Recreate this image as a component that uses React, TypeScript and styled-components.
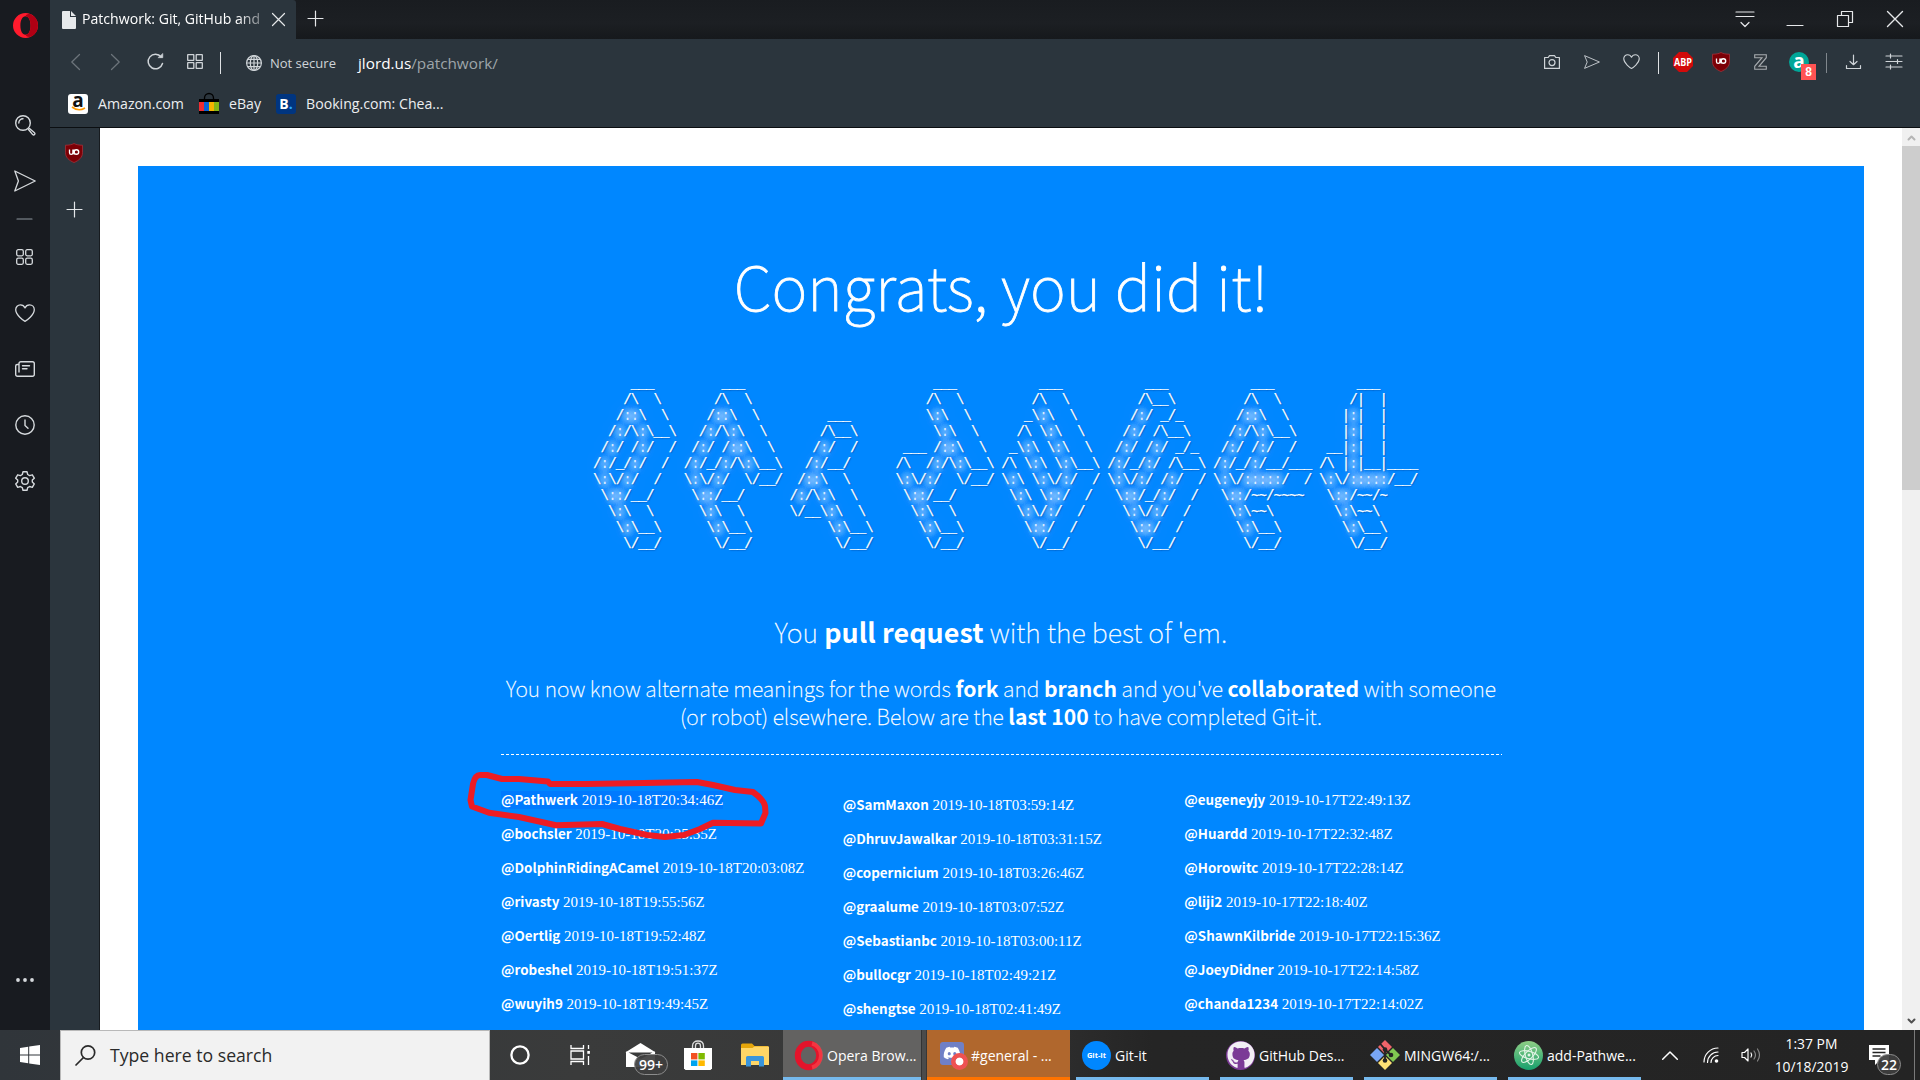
import React from "react";
import styled, { createGlobalStyle, css } from "styled-components";
import { FaDiscord, FaGithub } from "react-icons/fa";

const UI_FONT = `"Open Sans", "Noto Sans", sans-serif`;
const PAGE_FONT = `"Noto Sans CJK JP", "Open Sans", sans-serif`;

const GlobalStyle = createGlobalStyle`
  *, *::before, *::after { box-sizing: border-box; }
  body { margin: 0; background: #fff; font-family: ${UI_FONT}; overflow: hidden; }
  svg { display: block; flex: none; overflow: visible; }
`;

const Desktop = styled.div`
  width: 1920px;
  height: 1080px;
  display: flex;
  flex-direction: column;
  overflow: hidden;
`;

const Browser = styled.div`
  height: 1030px;
  display: flex;
`;

/* ---------- left rail ---------- */
const Rail = styled.nav`
  width: 50px;
  display: flex;
  flex-direction: column;
  background: #181b20;
  color: #d6dadd;
`;

const RailSlot = styled.div<{ $h?: number }>`
  height: ${(p) => p.$h ?? 56}px;
  display: grid;
  place-items: center;
  padding-right: 1px;
`;

const RailLogo = styled(RailSlot)`
  padding: 0 0 0 1px;
  margin-bottom: 47px;
`;

const RailMore = styled(RailSlot)`
  margin: auto 0 22px;
`;

/* ---------- browser chrome ---------- */
const Main = styled.div`
  flex: 1;
  display: flex;
  flex-direction: column;
`;

const TabStrip = styled.div`
  height: 39px;
  display: flex;
  background: linear-gradient(#191c20, #1c1f23 60%, #16191c);
  color: #e6e8ea;
`;

const Tab = styled.div`
  width: 246px;
  display: flex;
  align-items: center;
  padding-left: 12px;
  background: #2b353d;
  border-top-right-radius: 3px;
`;

const TabTitle = styled.span`
  width: 180px;
  margin: 0 0 2px 6px;
  overflow: hidden;
  white-space: nowrap;
  font-size: 14.1px;
  line-height: 20px;
  color: #fff;
  mask-image: linear-gradient(90deg, #000 155px, rgba(0, 0, 0, 0.35) 180px);
`;

const TabClose = styled.div`
  display: grid;
  place-items: center;
  width: 32px;
`;

const NewTab = styled.div`
  display: grid;
  place-items: center;
  width: 39px;
  padding-bottom: 2px;
`;

const WindowButtons = styled.div`
  margin-left: auto;
  display: flex;
`;

const WindowButton = styled.div`
  width: 50px;
  display: grid;
  place-items: center;
  padding-bottom: 1px;
`;

const Chrome = styled.div`
  height: 89px;
  background: #2b353d;
  border-bottom: 1px solid #0b0e11;
  color: #cfd4d8;
`;

const AddressRow = styled.div`
  height: 46px;
  display: flex;
  align-items: center;
  padding: 0 0 1px 5px;
`;

const IconSlot = styled.div<{ $w?: number; $dim?: boolean }>`
  width: ${(p) => p.$w ?? 40}px;
  display: grid;
  place-items: center;
  opacity: ${(p) => (p.$dim ? 0.4 : 1)};
`;

const Separator = styled.div<{ $dim?: boolean; $h?: number }>`
  width: 1px;
  height: ${(p) => p.$h ?? 22}px;
  margin-top: 2px;
  background: ${(p) => (p.$dim ? "#80878d" : "#dfe2e5")};
`;

const Security = styled.div`
  display: flex;
  align-items: center;
  gap: 8px;
  margin: 2px 0 0 20px;
  width: 112px;
  font-size: 13px;
  line-height: 20px;
`;

const Url = styled.div`
  margin-top: 2px;
  font-size: 15.3px;
  line-height: 20px;
  color: #9ea5aa;

  span { color: #fff; }
`;

const Tools = styled.div`
  margin-left: auto;
  display: flex;
  align-items: center;
  padding-right: 4.5px;
`;

const AddonBadge = styled.div`
  position: relative;
`;

const BadgeCount = styled.span`
  position: absolute;
  left: 12px;
  top: 12px;
  width: 15px;
  height: 16px;
  background: #ff5353;
  color: #fff;
  font: 700 12px/16px "Liberation Sans", sans-serif;
  text-align: center;
`;

const BookmarkBar = styled.div`
  height: 38px;
  display: flex;
  align-items: center;
  padding-left: 18px;
  font-size: 14.15px;
  line-height: 20px;
  color: #eceef0;
`;

const Bookmark = styled.div<{ $w: number }>`
  width: ${(p) => p.$w}px;
  display: flex;
  align-items: center;
  gap: 10px;
  white-space: nowrap;
`;

const FavTile = styled.div<{ $bg: string; $fg: string }>`
  width: 20px;
  height: 20px;
  border-radius: 3px;
  background: ${(p) => p.$bg};
  color: ${(p) => p.$fg};
  font: 700 14px/20px "Open Sans", sans-serif;
  text-align: center;

  i { color: #2aa8ff; font-style: normal; }
`;

const AmazonTile = styled(FavTile)`
  display: flex;
  flex-direction: column;
  align-items: center;
  font: 700 19px/13px "Open Sans", sans-serif;
`;

/* ---------- page area ---------- */
const Body = styled.div`
  flex: 1;
  display: flex;
  min-height: 0;
`;

const AddonPanel = styled.aside`
  width: 50px;
  background: #2b353d;
  border-right: 1px solid #171b1f;
  color: #e2e5e8;
`;

const Viewport = styled.main`
  flex: 1;
  padding: 38px 38px 0;
  background: #fff;
  overflow: hidden;
`;

const Blue = styled.section`
  height: 900px;
  padding: 84px 363px 0;
  background: #0087ff;
  color: #fff;
  font-family: ${PAGE_FONT};
  font-weight: 100;
  text-align: center;
  white-space: nowrap;
`;

const Title = styled.h1`
  margin: 0;
  font-size: 61.1px;
  line-height: 70px;
  font-weight: 100;
  letter-spacing: 0.06px;
  -webkit-text-stroke: 0.8px #fff;
`;

const Ascii = styled.pre`
  margin: 56px 0 0 92px;
  height: 176px;
  text-align: left;
  font: 14px/16px "Liberation Mono", monospace;
  letter-spacing: -0.84px;
  -webkit-text-stroke: 0.25px #fff;
  text-shadow: 1px 1px 1px rgba(0, 60, 140, 0.55);
`;

const halo = (blur: number, color: string, times: number) => Array(times).fill(`0 0 ${blur}px ${color}`).join(", ");

const Glow = styled.span`
  color: rgba(255, 255, 255, 0.8);
  -webkit-text-stroke: 0;
  text-shadow: ${halo(6, "#fff", 2)}, ${halo(10, "#fff", 5)}, ${halo(18, "rgba(215, 225, 255, 0.9)", 3)};
`;

const Subtitle = styled.h2`
  margin: 64px 0 0;
  font-size: 26.9px;
  line-height: 32px;
  font-weight: 100;
  letter-spacing: 0.07px;
  -webkit-text-stroke: 0.3px #fff;
`;

const Strong = styled.strong`
  font-weight: 700;
  -webkit-text-stroke: 0;
`;

const Lead = styled.p`
  margin: 26px -10px 24px;
  font-size: 21.17px;
  line-height: 28px;
  -webkit-text-stroke: 0.3px #fff;
`;

const Rule = styled.hr`
  margin: 0 -1px 0 0;
  border: 0;
  height: 1px;
  background: repeating-linear-gradient(90deg, #fff 0 3px, transparent 3px 5px);
`;

const ListArea = styled.div`
  position: relative;
  margin-top: 28px;
`;

const Columns = styled.div`
  display: grid;
  grid-template-columns: repeat(3, 316.67px);
  column-gap: 25px;
  text-align: left;
`;

const UserColumn = styled.ul<{ $shift?: boolean }>`
  margin: 0;
  padding: ${(p) => (p.$shift ? 5 : 0)}px 0 0;
  list-style: none;
`;

const User = styled.li`
  height: 34px;
  font: 400 15px/34px "Liberation Serif", serif;
`;

const Entry = styled.span<{ $selected?: boolean }>`
  ${(p) => p.$selected && css`
    padding: 1px 0;
    background: #007aff;
  `}
`;

const Handle = styled.b`
  font: 700 13.4px/0 ${PAGE_FONT};
`;

const Marker = styled.svg`
  position: absolute;
  left: -41px;
  top: -13px;
`;

const Scrollbar = styled.div`
  width: 18px;
  display: flex;
  flex-direction: column;
  background: #f0f0f0;
`;

const ScrollArrow = styled.div`
  height: 18px;
  display: grid;
  place-items: center;
`;

const Thumb = styled.div`
  height: 344px;
  background: #cdcdcd;
  margin-bottom: auto;
`;

/* ---------- taskbar ---------- */
const Taskbar = styled.footer`
  height: 50px;
  display: flex;
  background: linear-gradient(90deg, #30353a, #3a3b3b 30%, #383838 48%, #252525 60%, #242424);
  color: #fff;
  font-size: 14px;
`;

const StartButton = styled.div`
  width: 60px;
  display: grid;
  place-items: center;
`;

const SearchBox = styled.div`
  width: 430px;
  display: flex;
  align-items: center;
  gap: 13px;
  padding: 0 0 2px 14px;
  background: #f2f2f2;
  border: 1px solid #b9b9b9;
  border-bottom: 0;
  color: #2a2a2a;
  font-size: 17.65px;
`;

const Pinned = styled.div<{ $w: number }>`
  width: ${(p) => p.$w}px;
  display: grid;
  place-items: center;
  position: relative;
`;

const CountBubble = styled.span`
  position: absolute;
  left: 24px;
  top: 24px;
  width: 34px;
  height: 21px;
  border: 1px solid #8c8c8c;
  border-radius: 11px;
  background: rgba(62, 62, 62, 0.93);
  font: 600 14px/19px ${UI_FONT};
  text-align: center;
`;

const TaskCell = styled.div`
  width: 144px;
  display: flex;
`;

const TaskBody = styled.div<{ $state?: "active" | "alert" }>`
  display: flex;
  align-items: center;
  gap: 4px;
  white-space: nowrap;
  margin-left: ${(p) => (p.$state ? 0 : 5)}px;
  padding: 3px 0 0 ${(p) => (p.$state ? 11 : 6)}px;
  width: ${(p) => (p.$state === "active" ? 138 : p.$state === "alert" ? 143 : 133)}px;
  background: ${(p) => (p.$state === "active" ? "#636261" : p.$state === "alert" ? "#b0672d" : "none")};
  border-bottom: 3px solid ${(p) => (p.$state === "alert" ? "#ff7300" : "#76b9ed")};
  box-shadow: ${(p) => (p.$state === "active" ? "1px 0 #333, 5px 0 #4b4b4b" : "none")};
`;

const TaskIcon = styled.div<{ $bg?: string }>`
  position: relative;
  width: 29px;
  height: 29px;
  flex: none;
  display: grid;
  place-items: center;
  border-radius: 50%;
  background: ${(p) => p.$bg ?? "none"};
  font: 700 7.5px/29px "Open Sans", sans-serif;
`;

const DiscordTile = styled.div`
  width: 24px;
  height: 23px;
  border-radius: 3px;
  background: #6f80c6;
  display: grid;
  place-items: center;
  margin: -4px 0 0 -1px;
`;

const RecordDot = styled.span`
  position: absolute;
  left: 13px;
  top: 12px;
  width: 17px;
  height: 17px;
  border-radius: 50%;
  background: radial-gradient(circle, #fff 0 3.5px, #ee5252 4.3px);
`;

const Tray = styled.div`
  flex: 1;
  display: flex;
  align-items: center;
  padding-left: 3px;
`;

const TraySlot = styled.div<{ $w: number }>`
  width: ${(p) => p.$w}px;
  display: grid;
  place-items: center;
`;

const Clock = styled.div`
  width: 84px;
  padding: 0 0 1px 1px;
  text-align: center;
  font-size: 13.9px;
  line-height: 23px;
`;

const Notifications = styled(Pinned)`
  height: 50px;
  margin-left: 6px;
`;

const NoticeBubble = styled(CountBubble)`
  left: 18px;
  width: 24px;
`;

const ShowDesktop = styled.div`
  width: 6px;
  height: 50px;
  margin-left: auto;
  border-left: 1px solid #7a7a7a;
`;

/* ---------- icons ---------- */
type IconProps = { size?: number; w?: number; children: React.ReactNode; sw?: number; h?: number };
const Line = ({ size = 20, w, h, sw = 1.2, children }: IconProps) => (
  <svg width={w ?? size} height={h ?? size} viewBox={`0 0 ${w ?? size} ${h ?? size}`} fill="none" stroke="currentColor" strokeWidth={sw} strokeLinecap="round" strokeLinejoin="round">
    {children}
  </svg>
);

const OperaLogo = () => (
  <svg width="25" height="25" viewBox="0 0 24 24">
    <path fillRule="evenodd" fill="#ff1b2d" d="M12 0a12 12 0 1 0 0 24 12 12 0 0 0 0-24zm0 3.1c3 0 4.9 3.8 4.9 8.9s-1.9 8.9-4.9 8.9S7.1 17.1 7.1 12 9 3.1 12 3.1z" />
    <path fill="#b00014" d="M12 3.100C13 .6 16 .9 17.500 1.350a12 12 0 0 1 0 21.300C16 23.100 13 23.400 12 20.900c3 0 4.900-3.800 4.900-8.900S15 3.100 12 3.100z" />
  </svg>
);

const TaskOpera = () => (
  <svg width="29" height="29" viewBox="0 0 29 29">
    <ellipse cx="14.500" cy="14.500" rx="10.700" ry="11.700" fill="none" stroke="#e3142b" strokeWidth="6" />
    <path d="M18 2.500a11.500 12.300 0 0 1 0 24" fill="none" stroke="#ff4b50" strokeWidth="4" opacity=".6" />
  </svg>
);

const Shield = () => (
  <svg width="18" height="20" viewBox="0 0 18 20">
    <path d="M9 .5c2.400 1.300 5 1.700 8.500 1.700v7.600c0 4.500-3.500 7.700-8.500 9.700C4 17.500.5 14.300.5 9.800V2.200C4 2.200 6.600 1.800 9 .5z" fill="#7c0006" stroke="#a33038" strokeWidth=".8" />
    <path d="M4.500 6.500v3.200a1.700 1.700 0 0 0 3.400 0V6.500M9 6.500v5" fill="none" stroke="#fff" strokeWidth="1.300" />
    <circle cx="11.400" cy="9" r="2.300" fill="none" stroke="#fff" strokeWidth="1.400" />
  </svg>
);

const Four = ({ w, h, r }: { w: number; h: number; r: number }) => (
  <Line w={w} h={h} sw={1.3}>
    {[0, 1].map((i) => [0, 1].map((j) => (
      <rect key={`${i}${j}`} x={0.7 + i * (w / 2 + 0.5)} y={0.7 + j * (h / 2 + 0.5)} width={w / 2 - 1.9} height={h / 2 - 1.9} rx={r} />
    )))}
  </Line>
);

const Heart = ({ w, h }: { w: number; h: number }) => (
  <svg width={w} height={h} viewBox="0 0 20 18" fill="none" stroke="currentColor" strokeWidth="1.3" strokeLinejoin="round">
    <path d="M10 17.300C8.500 16.600.7 11 .7 5.800.7 3 2.800.8 5.400.8 7.500.8 9.200 2 10 3.900 10.800 2 12.500.8 14.600.8c2.600 0 4.700 2.200 4.700 5C19.300 11 11.500 16.600 10 17.300z" />
  </svg>
);

const Send = ({ w, h }: { w: number; h: number }) => (
  <svg width={w} height={h} viewBox="0 0 22 22" preserveAspectRatio="none" fill="none" stroke="currentColor" strokeWidth="1.3" strokeLinejoin="round">
    <path d="M.8 1l20.400 10L.8 21l3.600-10z" />
  </svg>
);

const Windows = () => (
  <svg width="20" height="20" viewBox="0 0 20 20" fill="#fff">
    <path d="M0 2.900l8.200-1.100v7.700H0zM9.200 1.600L20 0v9.500H9.200zM0 10.500h8.200v7.700L0 17.100zM9.200 10.500H20V20L9.200 18.400z" />
  </svg>
);

const Magnifier = () => (
  <Line size={22} sw={1.7}>
    <circle cx="13" cy="8.500" r="6.700" />
    <path d="M8.500 13.500L1 21" />
  </Line>
);

const Mail = () => (
  <svg width="31" height="24" viewBox="0 0 31 24">
    <path d="M1 9L15.500 0 30 9v15H1z" fill="#fff" />
    <path d="M3.500 9.500h24L16 16z" fill="#3a3b3b" />
    <path d="M1 9l14.500 9.500L30 9" fill="none" stroke="#fff" strokeWidth="1.200" />
  </svg>
);

const Store = () => (
  <svg width="28" height="29" viewBox="0 0 28 29">
    <path d="M8.500 8V5C8.500 1.500 11 0 14 0s5.500 1.500 5.500 5V8M11.500 8V5c0-1.500 1-2.800 2.500-2.800s2.500 1.300 2.500 2.800V8" fill="none" stroke="#ddd" strokeWidth="1.300" />
    <path d="M0 7h28v20.500L26.500 29h-25L0 27.500z" fill="#fff" />
    <path d="M7 12h6.400v6.400H7z" fill="#f25022" />
    <path d="M14.400 12h6.400v6.400h-6.400z" fill="#7fba00" />
    <path d="M7 19.400h6.400v5.600H7z" fill="#00a4ef" />
    <path d="M14.400 19.400h6.400v5.600h-6.400z" fill="#ffb900" />
  </svg>
);

const Folder = () => (
  <svg width="28" height="24" viewBox="0 0 28 24">
    <path d="M0 2a1.500 1.500 0 0 1 1.500-1.500H11L13.500 3H27v6H0z" fill="#e5a50a" />
    <path d="M0 5h11.500L13.500 3.500H28V22H0z" fill="#ffd667" />
    <path d="M5 23.500v-9a1.500 1.500 0 0 1 1.500-1.500h15a1.500 1.500 0 0 1 1.500 1.500v9h-5V18h-8v5.500z" fill="#3a95dc" />
  </svg>
);

const TaskView = () => (
  <svg width="21" height="20" viewBox="0 0 21 20" fill="none" stroke="#fff" strokeWidth="1.3">
    <path d="M1 0v3.500h12.500V0M1 20v-3.500h12.500V20M1 6h12.500v8H1zM18.500 0v4M18.500 11v9" />
    <path d="M17.300 6h2.600v2.800h-2.600z" fill="#fff" stroke="none" />
  </svg>
);

const GitWindows = () => (
  <svg width="30" height="30" viewBox="0 0 30 30">
    <path d="M15 0l7 7-7 7-7-7z" fill="#f0646a" />
    <path d="M23 8l7 7-7 7-7-7z" fill="#80c752" />
    <path d="M7 8l7 7-7 7-7-7z" fill="#79a6f6" />
    <path d="M15 16l7 7-7 7-7-7z" fill="#ffe175" />
    <path d="M10 3.500l5 6v11M15 9.500l6 5.500" fill="none" stroke="#242424" strokeWidth="1.900" />
    <circle cx="15" cy="9.500" r="2.300" fill="#242424" />
    <circle cx="21" cy="15" r="2.300" fill="#242424" />
    <circle cx="15" cy="20.500" r="2.300" fill="#242424" />
  </svg>
);

const Atom = () => (
  <svg width="22" height="22" viewBox="0 0 22 22" fill="none" stroke="#e2f4e6" strokeWidth="1.1">
    <ellipse cx="11" cy="11" rx="9.800" ry="3.700" transform="rotate(15 11 11)" />
    <ellipse cx="11" cy="11" rx="9.800" ry="3.700" transform="rotate(75 11 11)" />
    <ellipse cx="11" cy="11" rx="9.800" ry="3.700" transform="rotate(135 11 11)" />
    <circle cx="11" cy="11" r="1.500" fill="#e2f4e6" stroke="none" />
  </svg>
);

/* ---------- data ---------- */
// Each row of the banner is a list of [column, characters] runs.
type Run = [number, string];
const r = String.raw;
const BANNER: Run[][] = [
  [[5, "___"], [17, "___"], [45, "___"], [59, "___"], [73, "___"], [87, "___"], [101, "___"]],
  [[4, r`/\  \ `], [16, r`/\  \ `], [44, r`/\  \ `], [58, r`/\  \ `], [72, r`/\__\ `], [86, r`/\  \ `], [100, "/|  |"]],
  [[3, r`/::\  \ `], [15, r`/::\  \ `], [31, "___"], [44, r`\:\  \ `], [57, r`_\:\  \ `], [71, "/:/ _/_"], [85, r`/::\  \ `], [99, "|:|  |"]],
  [[2, r`/:/\:\__\ `], [14, r`/:/\:\  \ `], [30, r`/\__\ `], [45, r`\:\  \ `], [56, r`/\ \:\  \ `], [70, r`/:/ /\__\ `], [84, r`/:/\:\__\ `], [99, "|:|  |"]],
  [[1, "/:/ /:/  /"], [13, r`/:/ /::\  \ `], [29, "/:/  /"], [41, "___"], [45, r`/::\  \ `], [55, r`_\:\ \:\  \ `], [69, "/:/ /:/ _/_"], [83, "/:/ /:/  /"], [97, "__|:|  |"]],
  [[0, "/:/_/:/  /"], [12, r`/:/_/:/\:\__\ `], [28, "/:/__/"], [40, r`/\  /:/\:\__\ `], [54, r`/\ \:\ \:\__\ `], [68, r`/:/_/:/ /\__\ `], [82, "/:/_/:/__/___"], [96, r`/\ |:|__|____`]],
  [[0, r`\:\/:/  /`], [12, r`\:\/:/  \/__/`], [27, r`/::\  \ `], [40, r`\:\/:/  \/__/`], [54, r`\:\ \:\/:/  /`], [68, r`\:\/:/ /:/  /`], [82, r`\:\/:::::/  /`], [96, r`\:\/:::::/__/`]],
  [[1, r`\::/__/`], [13, r`\::/__/`], [26, r`/:/\:\  \ `], [41, r`\::/__/`], [55, r`\:\ \::/  /`], [69, r`\::/_/:/  /`], [83, r`\::/~~/~~~~`], [97, r`\::/~~/~`]],
  [[2, r`\:\  \ `], [14, r`\:\  \ `], [26, r`\/__\:\  \ `], [42, r`\:\  \ `], [56, r`\:\/:/  /`], [70, r`\:\/:/  /`], [84, r`\:\~~\ `], [98, r`\:\~~\ `]],
  [[3, r`\:\__\ `], [15, r`\:\__\ `], [31, r`\:\__\ `], [43, r`\:\__\ `], [57, r`\::/  /`], [71, r`\::/  /`], [85, r`\:\__\ `], [99, r`\:\__\ `]],
  [[4, r`\/__/`], [16, r`\/__/`], [32, r`\/__/`], [44, r`\/__/`], [58, r`\/__/`], [72, r`\/__/`], [86, r`\/__/`], [100, r`\/__/`]],
];

const bannerLine = (runs: Run[]) => runs.reduce((line, [col, text]) => line.trimEnd().padEnd(col) + text, "").trimEnd();

const USERS: [string, string][][] = [
  [["Pathwerk", "2019-10-18T20:34:46Z"], ["bochsler", "2019-10-18T20:25:35Z"], ["DolphinRidingACamel", "2019-10-18T20:03:08Z"], ["rivasty", "2019-10-18T19:55:56Z"], ["Oertlig", "2019-10-18T19:52:48Z"], ["robeshel", "2019-10-18T19:51:37Z"], ["wuyih9", "2019-10-18T19:49:45Z"]],
  [["SamMaxon", "2019-10-18T03:59:14Z"], ["DhruvJawalkar", "2019-10-18T03:31:15Z"], ["copernicium", "2019-10-18T03:26:46Z"], ["graalume", "2019-10-18T03:07:52Z"], ["Sebastianbc", "2019-10-18T03:00:11Z"], ["bullocgr", "2019-10-18T02:49:21Z"], ["shengtse", "2019-10-18T02:41:49Z"]],
  [["eugeneyjy", "2019-10-17T22:49:13Z"], ["Huardd", "2019-10-17T22:32:48Z"], ["Horowitc", "2019-10-17T22:28:14Z"], ["liji2", "2019-10-17T22:18:40Z"], ["ShawnKilbride", "2019-10-17T22:15:36Z"], ["JoeyDidner", "2019-10-17T22:14:58Z"], ["chanda1234", "2019-10-17T22:14:02Z"]],
];

const Task = ({ icon, label, state }: { icon: React.ReactNode; label: string; state?: "active" | "alert" }) => (
  <TaskCell>
    <TaskBody $state={state}>
      {icon}
      <span>{label}</span>
    </TaskBody>
  </TaskCell>
);

export default function App() {
  return (
    <Desktop>
      <GlobalStyle />
      <Browser>
        <Rail>
          <RailLogo $h={50}><OperaLogo /></RailLogo>
          <RailSlot>
            <Line size={20} sw={1.4}>
              <circle cx="8" cy="8" r="7.300" /><path d="M3.800 8A4.200 4.200 0 0 1 8 3.800M13.500 14.500l1-1 5 4.200a1.300 1.300 0 0 1-1.800 1.900z" />
            </Line>
          </RailSlot>
          <RailSlot><Send w={22} h={22} /></RailSlot>
          <RailSlot $h={20}><Line w={15} h={2}><path d="M0 1h15" stroke="#8d979e" /></Line></RailSlot>
          <RailSlot><Four w={17} h={16} r={1.5} /></RailSlot>
          <RailSlot><Heart w={20} h={18} /></RailSlot>
          <RailSlot>
            <Line w={20} h={16} sw={1.4}>
              <path d="M4 11V2.500A1.800 1.800 0 0 1 5.800.7h11.700a1.800 1.800 0 0 1 1.800 1.800v11a1.800 1.800 0 0 1-1.800 1.800H2.500a1.800 1.800 0 0 1-1.800-1.800V5A1.500 1.500 0 0 1 2.200 3.500H4M7.500 4.700h7M7.500 7.700h4.500" />
            </Line>
          </RailSlot>
          <RailSlot><Line size={20} sw={1.4}><circle cx="10" cy="10" r="9.200" /><path d="M10 5v5.500l3 2.800" /></Line></RailSlot>
          <RailSlot>
            <Line size={20} sw={1.4}>
              <circle cx="10" cy="10" r="3.300" />
              <path d="M8 .8h4l.7 2.700 1.900 1.100 2.700-.8 2 3.400-2 1.900v1.900l2 1.900-2 3.400-2.700-.8-1.900 1.100-.7 2.600H8l-.7-2.600-1.900-1.100-2.700.8-2-3.400 2-1.900V9.100l-2-1.900 2-3.400 2.700.8 1.900-1.100z" />
            </Line>
          </RailSlot>
          <RailMore>
            <svg width="19" height="4" fill="currentColor"><circle cx="3" cy="2" r="1.900" /><circle cx="10" cy="2" r="1.900" /><circle cx="17" cy="2" r="1.900" /></svg>
          </RailMore>
        </Rail>

        <Main>
          <TabStrip>
            <Tab>
              <svg width="14" height="18"><path d="M1 0h7v6h6v11a1 1 0 0 1-1 1H1a1 1 0 0 1-1-1V1a1 1 0 0 1 1-1zM9 0l5 5H9z" fill="#e6e9eb" /></svg>
              <TabTitle>Patchwork: Git, GitHub and</TabTitle>
              <TabClose><Line size={13}><path d="M.5.5l12 12M12.500.5l-12 12" /></Line></TabClose>
            </Tab>
            <NewTab><Line size={15}><path d="M7.500 0v15M0 7.500h15" /></Line></NewTab>
            <WindowButtons>
              <WindowButton><Line w={18} h={16}><path d="M0 1h18M0 5.500h18M5 11.500l4 4 4-4" /></Line></WindowButton>
              <WindowButton><Line w={16} h={16}><path d="M0 14.500h16" /></Line></WindowButton>
              <WindowButton><Line size={16}><path d="M.5 4.500h11v11H.5zM4.500 4.500v-4h11v11h-4" /></Line></WindowButton>
              <WindowButton><Line size={16} sw={1.4}><path d="M.5.5l15 15M15.500.5l-15 15" /></Line></WindowButton>
            </WindowButtons>
          </TabStrip>

          <Chrome>
            <AddressRow>
              <IconSlot $dim><Line w={9} h={16}><path d="M8.500.5L.8 8l7.700 7.500" /></Line></IconSlot>
              <IconSlot $dim><Line w={9} h={16}><path d="M.5.5L8.200 8 .5 15.500" /></Line></IconSlot>
              <IconSlot><Line size={17} sw={1.5}><path d="M15.500 10.500A7.300 7.300 0 1 1 14.200 4" /><path d="M11.300 4.700h4.500V.8z" fill="currentColor" strokeWidth=".6" /></Line></IconSlot>
              <IconSlot><Four w={16} h={15} r={0.3} /></IconSlot>
              <IconSlot $w={11}><Separator /></IconSlot>
              <Security>
                <Line size={16}><circle cx="8" cy="8" r="7.400" /><ellipse cx="8" cy="8" rx="3.700" ry="7.400" /><path d="M8 .6v14.800M.6 8h14.800M1.800 4.300h12.400M1.800 11.700h12.400" /></Line>
                Not secure
              </Security>
              <Url><span>jlord.us</span>/patchwork/</Url>
              <Tools>
                <IconSlot><Line w={16} h={14}><path d="M.6 2.500h3.600L5.500.6h5l1.300 1.900h3.600v10.900H.6z" /><circle cx="8" cy="7.600" r="3" /></Line></IconSlot>
                <IconSlot><Send w={16} h={14} /></IconSlot>
                <IconSlot><Heart w={17} h={15} /></IconSlot>
                <IconSlot $w={13}><Separator /></IconSlot>
                <IconSlot $w={37}>
                  <svg width="20" height="20"><path d="M6 0h8l6 6v8l-6 6H6l-6-6V6z" fill="#d20a0a" /><text x="10" y="14" textAnchor="middle" fill="#fff" fontSize="10.500" fontWeight="700" fontFamily="Open Sans" textLength="18" lengthAdjust="spacingAndGlyphs">ABP</text></svg>
                </IconSlot>
                <IconSlot $w={39}><Shield /></IconSlot>
                <IconSlot $w={39}>
                  <svg width="13" height="16"><path d="M.7.7h11.600v3L5 12.300h7.300v3H.7v-3L8 3.700H.7z" fill="#333a40" stroke="#a7acb0" strokeWidth="1.100" /></svg>
                </IconSlot>
                <IconSlot $w={39}>
                  <AddonBadge>
                    <svg width="20" height="20"><circle cx="10" cy="10" r="10" fill="#00a698" /><text x="10" y="15.500" textAnchor="middle" fill="#fff" fontSize="19" fontWeight="700" fontFamily="Open Sans">a</text></svg>
                    <BadgeCount>8</BadgeCount>
                  </AddonBadge>
                </IconSlot>
                <IconSlot $w={15}><Separator $dim $h={20} /></IconSlot>
                <IconSlot $w={39}><Line w={15} h={14}><path d="M7.500 0v9.500M4 6.500l3.500 3.200L11 6.500M.5 10.500v3h14v-3" /></Line></IconSlot>
                <IconSlot $w={43}><Line w={16} h={15}><path d="M0 2h16M0 7.500h16M0 13h16M4.500 0v4M11.500 5.500v4M4.500 11v4" /></Line></IconSlot>
              </Tools>
            </AddressRow>
            <BookmarkBar>
              <Bookmark $w={131}>
                <AmazonTile $bg="#fff" $fg="#111">
                  a<svg width="15" height="5"><path d="M1 0q6.500 5 13 1" fill="none" stroke="#f90" strokeWidth="1.600" /></svg>
                </AmazonTile>
                Amazon.com
              </Bookmark>
              <Bookmark $w={77}>
                <svg width="20" height="20"><path d="M5.500 5V4a4.500 4.500 0 0 1 9 0v1" fill="none" stroke="#000" strokeWidth="1.300" /><path d="M0 5h20v15H0z" fill="#000" /><path d="M0 8h5v9H0z" fill="#f02d32" /><path d="M5 8h5v9H5z" fill="#0a64d8" /><path d="M10 8h5v9h-5z" fill="#f7b500" /><path d="M15 8h5v9h-5z" fill="#86b817" /></svg>
                eBay
              </Bookmark>
              <Bookmark $w={200}><FavTile $bg="#003580" $fg="#fff">B<i>.</i></FavTile>Booking.com: Chea...</Bookmark>
            </BookmarkBar>
          </Chrome>

          <Body>
            <AddonPanel>
              <RailSlot $h={50}><Shield /></RailSlot>
              <RailSlot $h={63}><Line size={15}><path d="M7.500 0v15M0 7.500h15" /></Line></RailSlot>
            </AddonPanel>
            <Viewport>
              <Blue>
                <Title>Congrats, you did it!</Title>
                <Ascii>
                  {BANNER.map((runs, i) => (
                    <React.Fragment key={i}>
                      {bannerLine(runs).split(/(:+)/).map((part, j) => (part.startsWith(":") ? <Glow key={j}>{part}</Glow> : part))}
                      {"\n"}
                    </React.Fragment>
                  ))}
                </Ascii>
                <Subtitle>You <Strong>pull request</Strong> with the best of 'em.</Subtitle>
                <Lead>
                  You now know alternate meanings for the words <Strong>fork</Strong> and <Strong>branch</Strong> and you've <Strong>collaborated</Strong> with someone
                  <br />
                  (or robot) elsewhere. Below are the <Strong>last 100</Strong> to have completed Git-it.
                </Lead>
                <Rule />
                <ListArea>
                  <Columns>
                    {USERS.map((col, c) => (
                      <UserColumn key={c} $shift={c === 1}>
                        {col.map(([name, date], i) => (
                          <User key={name}><Entry $selected={c === 0 && i === 0}><Handle>@{name}</Handle> {date}</Entry></User>
                        ))}
                      </UserColumn>
                    ))}
                  </Columns>
                  <Marker width="320" height="80" viewBox="460 770 320 80" fill="none" stroke="#ed1c24" strokeWidth="6" strokeLinejoin="round" strokeLinecap="round">
                    <path d="M472 806.500L470.500 800L473 784Q475 775 480 775L487 775L502 779L519 779L548 781.500L550 784L586 784L644 783L697 782L713 785L735 790L753 792Q764 800 765 806L765.500 813L761 823.500L713 822.700L700 829L684 835L665 837L647 835L620 829L602 824L556 825.300L519 817L489 812.700Z" />
                  </Marker>
                </ListArea>
              </Blue>
            </Viewport>
            <Scrollbar>
              <ScrollArrow><Line w={7} h={5} sw={2}><path d="M.5 4.500l3-3 3 3" stroke="#b5b5b5" /></Line></ScrollArrow>
              <Thumb />
              <ScrollArrow><Line w={7} h={5} sw={2}><path d="M.5.5l3 3 3-3" stroke="#505050" /></Line></ScrollArrow>
            </Scrollbar>
          </Body>
        </Main>
      </Browser>

      <Taskbar>
        <StartButton><Windows /></StartButton>
        <SearchBox><Magnifier />Type here to search</SearchBox>
        <Pinned $w={60}><Line size={20} sw={2.3}><circle cx="10" cy="10" r="8.600" /></Line></Pinned>
        <Pinned $w={60}><TaskView /></Pinned>
        <Pinned $w={60}><Mail /><CountBubble>99+</CountBubble></Pinned>
        <Pinned $w={56}><Store /></Pinned>
        <Pinned $w={57}><Folder /></Pinned>
        <Task state="active" label="Opera Brow..." icon={<TaskIcon><TaskOpera /></TaskIcon>} />
        <Task state="alert" label="#general - ..." icon={<TaskIcon><DiscordTile><FaDiscord size={18} /></DiscordTile><RecordDot /></TaskIcon>} />
        <Task label="Git-it" icon={<TaskIcon $bg="#0087ff">Git-It</TaskIcon>} />
        <Task label="GitHub Des..." icon={<TaskIcon $bg="#7b3a96"><FaGithub size={28} color="#f2eef5" /></TaskIcon>} />
        <Task label="MINGW64:/..." icon={<GitWindows />} />
        <Task label="add-Pathwe..." icon={<TaskIcon $bg="linear-gradient(#8fcf86, #17a06d)"><Atom /></TaskIcon>} />
        <Tray>
          <TraySlot $w={40}><Line w={16} h={9} sw={1.5}><path d="M.7 8.300L8 1l7.300 7.300" /></Line></TraySlot>
          <TraySlot $w={42}>
            <Line w={16} h={16} sw={1.2}>
              <path d="M1 15A14 14 0 0 1 15 1M4.500 15.500A10.500 10.500 0 0 1 15 5M8 15.500A7 7 0 0 1 15 8.500" /><circle cx="13.500" cy="14" r="1.800" fill="currentColor" stroke="none" />
            </Line>
          </TraySlot>
          <TraySlot $w={37}>
            <Line w={20} h={16} sw={1.2}>
              <path d="M1 5.500h2.500L7 2v12l-3.500-3.500H1z" /><path d="M10 6q1.500 2 0 4" /><path d="M13 4q3 4 0 8M16.500 2q4 6 0 12" opacity=".45" />
            </Line>
          </TraySlot>
          <Clock>1:37 PM<br />10/18/2019</Clock>
          <Notifications $w={40}>
            <svg width="20" height="20"><path d="M0 0h20v15h-9l-5 5v-5H0z" fill="#fff" /><path d="M3.500 4h13M3.500 7.500h13M3.500 11h8" stroke="#242424" strokeWidth="1.300" /></svg>
            <NoticeBubble>22</NoticeBubble>
          </Notifications>
          <ShowDesktop />
        </Tray>
      </Taskbar>
    </Desktop>
  );
}
